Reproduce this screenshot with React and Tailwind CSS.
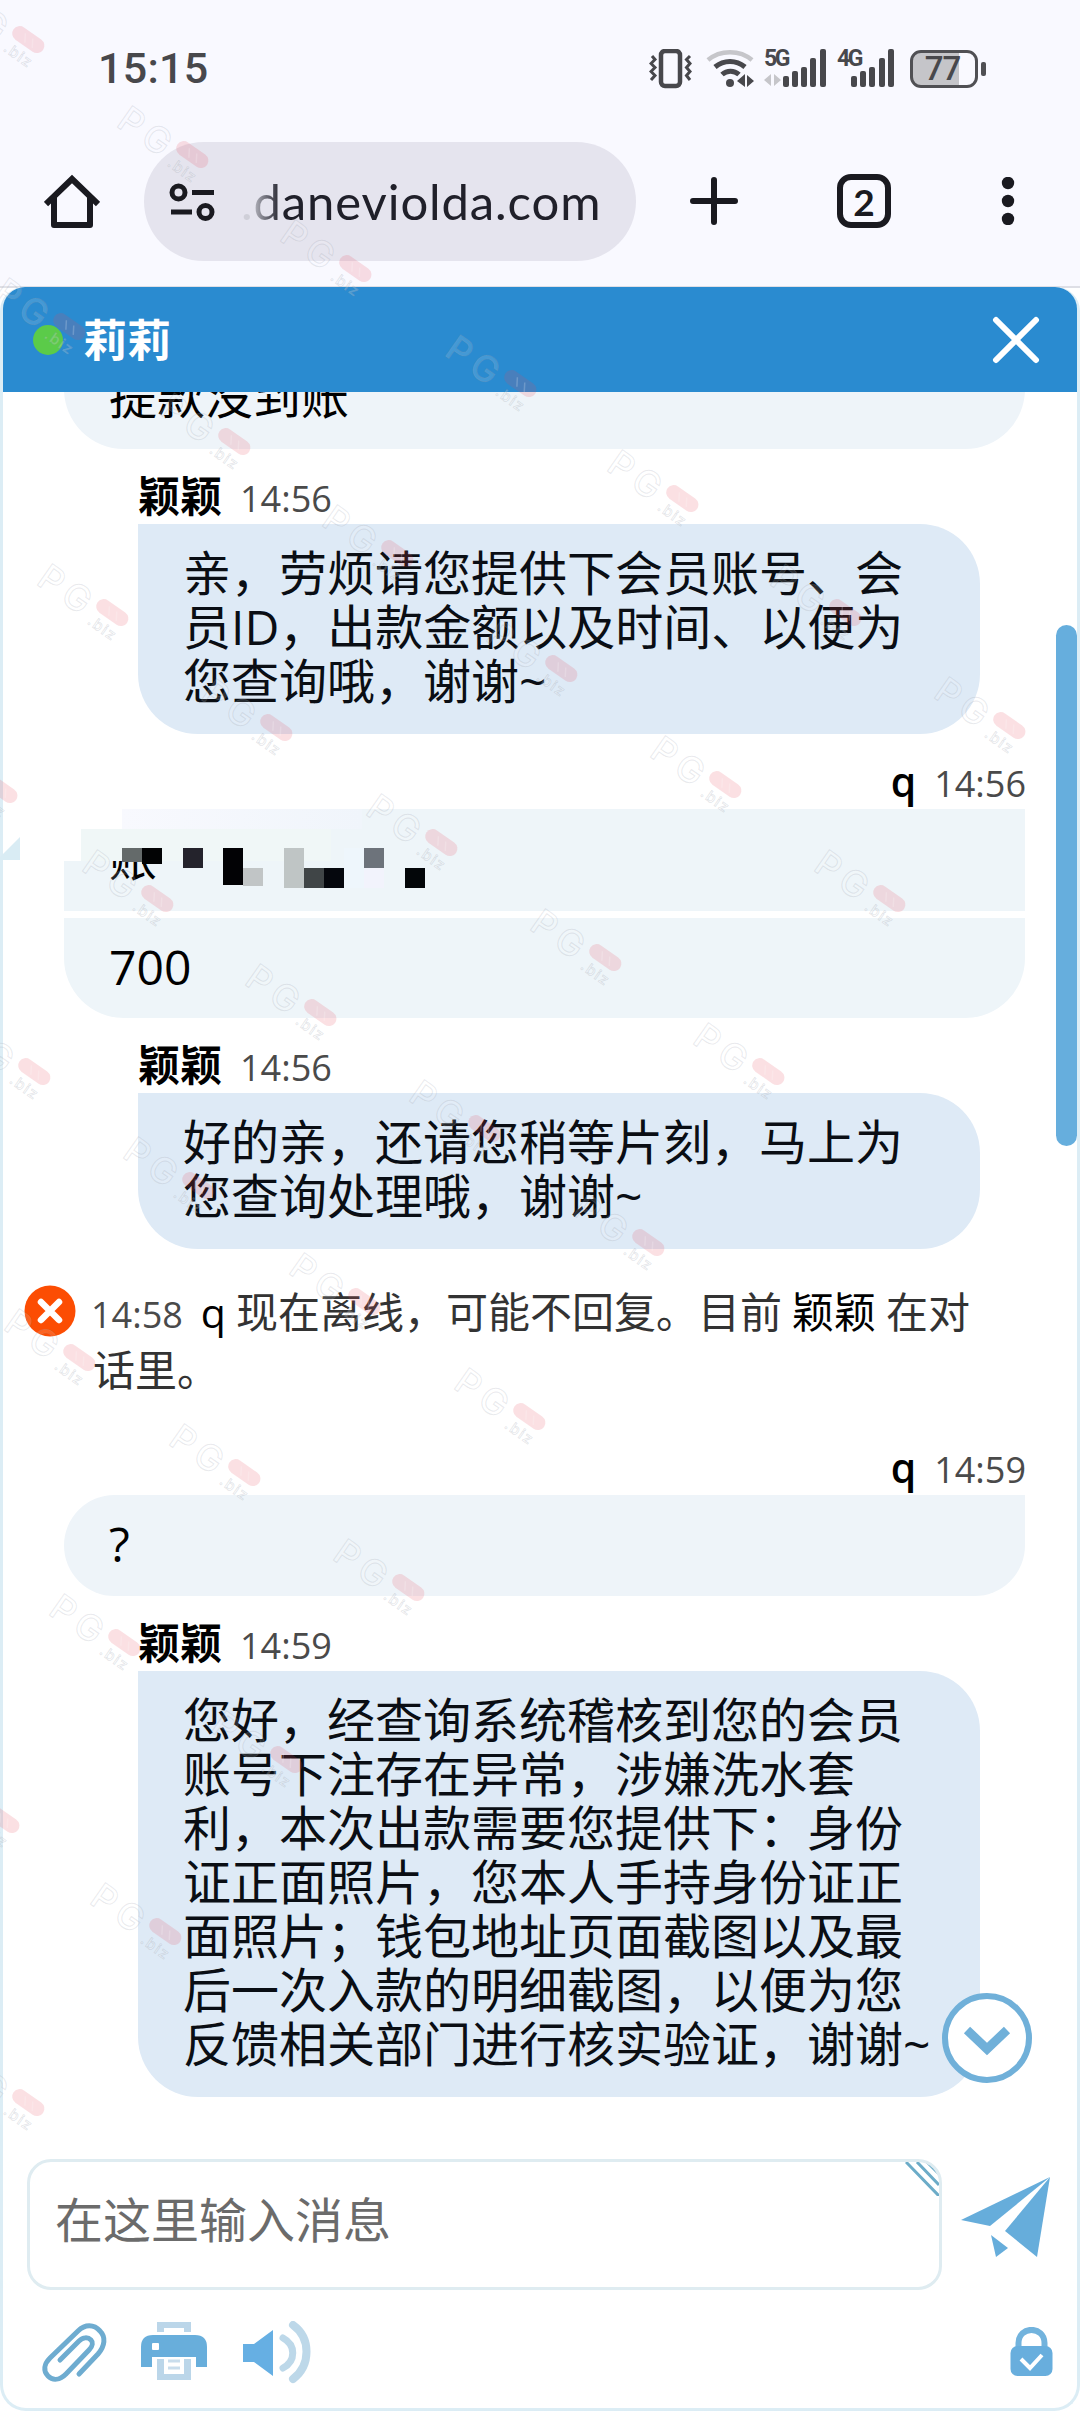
import React from 'react';

const watermarks = [
  [28, 40], [192, 155], [355, 269], [520, 384], [682, 499], [845, 613], [1009, 726],
  [69, 327], [234, 442], [397, 554], [561, 669], [725, 785], [889, 899],
  [-50, 497], [112, 613], [276, 728], [441, 843], [605, 958], [768, 1072],
  [1, 790], [157, 899], [320, 1013], [484, 1129], [648, 1243],
  [34, 1072], [198, 1186], [364, 1302], [529, 1417],
  [79, 1358], [244, 1473], [408, 1588],
  [124, 1643], [286, 1760],
  [3, 1820], [165, 1932], [28, 2103],
];

// x, y, width, height, colour of every mosaic block over the hidden account
const mosaic = [
  [0, 0, 20, 14, '#646a6a'],
  [20, 0, 20, 16, '#020304'],
  [61, 0, 20, 20, '#24232c'],
  [101, 0, 20, 37, '#020205'],
  [121, 20, 20, 18, '#c1c5c6'],
  [162, 0, 20, 40, '#bfc5c5'],
  [182, 20, 20, 20, '#404547'],
  [202, 20, 20, 20, '#05070d'],
  [222, 0, 20, 40, '#eef6fc'],
  [242, 0, 20, 20, '#6d737b'],
  [242, 20, 20, 20, '#f2f3fc'],
  [283, 20, 20, 20, '#030609'],
];

const Watermarks = () => (
  <svg className="absolute inset-0 pointer-events-none" width="1080" height="2412" viewBox="0 0 1080 2412">
    {watermarks.map(([x, y], index) => (
      <g key={index} transform={`translate(${x} ${y}) rotate(35)`}>
        <text
          x="-80"
          y="20"
          fontFamily="Inter, sans-serif"
          fontSize="36"
          fontWeight="500"
          letterSpacing="6"
          fill="#ffffff"
          fillOpacity="0.15"
          stroke="#8c94a0"
          strokeOpacity="0.2"
          strokeWidth="1"
        >
          PG
        </text>
        <rect x="-18" y="-8" width="36" height="15" rx="7.500" fill="#e8465a" fillOpacity="0.17" />
        <path d="M-6 -4L-1 4M3 -4L8 4" stroke="#ffffff" strokeOpacity="0.2" strokeWidth="1.5" />
        <text
          x="-15"
          y="23"
          fontFamily="Inter, sans-serif"
          fontSize="15"
          fontWeight="500"
          letterSpacing="1.5"
          fill="#ffffff"
          fillOpacity="0.2"
          stroke="#8c94a0"
          strokeOpacity="0.24"
          strokeWidth="0.8"
        >
          .biz
        </text>
      </g>
    ))}
  </svg>
);

const StatusBar = () => (
  <div className="h-[120px] pl-[98px] pr-[94px] pt-[17px] flex items-center justify-between text-[#48484c]">
    <span className="font-['Roboto'] font-medium text-[43px] leading-none tracking-[0.3px]">15:15</span>
    <div className="flex items-center">
      <svg width="44" height="40" viewBox="0 0 44 40" fill="none" stroke="#48484c">
        <rect x="12" y="2" width="19" height="35" rx="4" strokeWidth="4.5" />
        <path d="M3 7L6 10.5L2 14.5L6 18.5L2 22.5L6 26.5L2 31" strokeWidth="3" />
        <path d="M41 7L37.500 10.500L41 14.500L37.500 18.500L41 22.500L37.500 26.500L41 31" strokeWidth="3" />
      </svg>
      <svg className="ml-[13px]" width="50" height="40" viewBox="0 0 50 40" fill="none" strokeWidth="4.500">
        <path d="M2 11C14 0.500 34 0.500 46 11" stroke="#c6c6ca" />
        <path d="M9 18C18 10.500 30 10.500 39 18" stroke="#48484c" strokeWidth="5" />
        <path d="M16 25.500C21 21 28 21 33 25.500" stroke="#48484c" strokeWidth="5" />
        <circle cx="24" cy="34" r="4" fill="#48484c" />
        <path d="M31 32L39 25V38ZM41 26L48 32L41 38Z" fill="#48484c" />
      </svg>
      <div className="relative ml-[8px]">
        <svg width="64" height="40" viewBox="0 0 64 40" fill="#48484c">
          <path d="M0 31L7 25V37ZM10 25L17 31L10 37Z" fill="#c6c6ca" />
          <rect x="19" y="27" width="6" height="11" rx="2" />
          <rect x="28" y="22" width="6" height="16" rx="2" />
          <rect x="37" y="18" width="6" height="20" rx="2" />
          <rect x="46" y="9" width="6" height="29" rx="2" />
          <rect x="56" y="0" width="6" height="38" rx="2" />
        </svg>
        <span className="absolute left-0 top-0 font-['Roboto'] font-bold text-[23px] leading-[20px] tracking-[-2.5px]">5G</span>
      </div>
      <div className="relative ml-[9px]">
        <svg width="60" height="40" viewBox="0 0 60 40" fill="#48484c">
          <rect x="14" y="27" width="6" height="11" rx="2" />
          <rect x="23" y="22" width="6" height="16" rx="2" />
          <rect x="32" y="18" width="6" height="20" rx="2" />
          <rect x="42" y="9" width="6" height="29" rx="2" />
          <rect x="51" y="0" width="6" height="38" rx="2" />
        </svg>
        <span className="absolute left-0 top-0 font-['Roboto'] font-bold text-[23px] leading-[20px] tracking-[-2.5px]">4G</span>
      </div>
      <div className="ml-[13px] flex items-center gap-[3px]">
        <div className="flex h-[38px] w-[68px] items-center justify-center rounded-[11px] border-[3px] border-[#505054] bg-linear-to-r from-[#c5c5c9] from-75% to-[#f9f9ff] to-75%">
          <span className="font-['Roboto'] font-medium text-[33px] leading-none -ml-[3px] tracking-[-1px]">77</span>
        </div>
        <div className="h-[14px] w-[5px] rounded-[2px] bg-[#505054]" />
      </div>
    </div>
  </div>
);

const BrowserBar = () => (
  <div className="h-[165px] pt-[22px] flex items-start">
    <svg className="ml-[44px] mt-[32px]" width="56" height="56" viewBox="0 0 56 56" fill="none" stroke="#1a1a20" strokeWidth="6">
      <path d="M2 30L28 5L54 30" />
      <path d="M10 23V51H46V23" strokeLinejoin="round" />
    </svg>
    <div className="ml-[44px] flex h-[119px] w-[492px] items-center rounded-full bg-[#e5e4ee]">
      <svg className="ml-[25px]" width="46" height="40" viewBox="0 0 46 40" fill="none" stroke="#1a1a20" strokeWidth="5">
        <circle cx="9.500" cy="10.500" r="6.500" />
        <path d="M23 10.500H45M2 30H23" />
        <circle cx="36.500" cy="30" r="6.500" />
      </svg>
      <span className="ml-[26px] font-['Lato'] text-[49px] leading-none tracking-[0.9px] text-[#20202a]">
        <span className="bg-linear-to-r from-[#cfcfd8] from-20% to-[#20202a] bg-clip-text text-transparent">.d</span>aneviolda.com
      </span>
    </div>
    <svg className="ml-[54px] mt-[35px]" width="48" height="48" viewBox="0 0 48 48" stroke="#1a1a20" strokeWidth="6" strokeLinecap="round">
      <path d="M24 3V45M3 24H45" />
    </svg>
    <div className="ml-[99px] mt-[32px] flex size-[54px] items-center justify-center rounded-[14px] border-[6px] border-[#1a1a20]">
      <span className="font-['Lato'] font-bold text-[37px] leading-none text-[#1a1a20]">2</span>
    </div>
    <svg className="ml-[110px] mt-[35px]" width="14" height="48" viewBox="0 0 14 48" fill="#1a1a20">
      <circle cx="7" cy="6" r="6.200" />
      <circle cx="7" cy="24" r="6.200" />
      <circle cx="7" cy="42" r="6.200" />
    </svg>
  </div>
);

const ChatHeader = () => (
  <div className="flex h-[105px] shrink-0 items-center rounded-t-[22px] bg-[#2a8bd0] pl-[30px] pr-[35px]">
    <div className="size-[30px] rounded-full bg-[#5bcb49]" />
    <h1 className="ml-[20px] text-[44px] font-bold leading-none text-white">莉莉</h1>
    <svg className="ml-auto" width="52" height="52" viewBox="0 0 52 52" stroke="#ffffff" strokeWidth="6" strokeLinecap="round">
      <path d="M6 6L46 46M46 6L6 46" />
    </svg>
  </div>
);

const Meta = ({ name, time, own }) => (
  <div
    className={
      own
        ? 'flex h-[75px] items-baseline justify-end gap-[18px] pr-[51px] pt-[19px] leading-[56px]'
        : 'flex h-[75px] items-baseline gap-[18px] pl-[135px] pt-[19px] leading-[56px]'
    }
  >
    <span className={own ? 'text-[41px] font-semibold text-black' : 'text-[42px] font-bold text-black'}>{name}</span>
    <span className="text-[36px] text-[#4a4a4a]">{time}</span>
  </div>
);

const AgentBubble = ({ lines }) => (
  <div className="ml-[135px] w-[842px] rounded-b-[60px] rounded-tr-[60px] bg-[#deeaf6] pb-[26px] pl-[45px] pt-[22px] text-[48px] leading-[54px] text-[#0a0e14]">
    {lines.map((line, index) => (
      <p key={index} className="whitespace-nowrap">{line}</p>
    ))}
  </div>
);

const RedactedBubble = () => (
  <div className="relative ml-[61px] h-[102px] w-[961px] bg-[#eef5f9] pl-[45px] pt-[22px] text-[48px] leading-[54px] text-black">
    <span>账</span>
    <div className="absolute left-0 top-0 h-[52px] w-[17px] bg-white" />
    <div className="absolute left-0 top-0 h-[20px] w-[58px] bg-white" />
    <div className="absolute left-[17px] top-[20px] h-[32px] w-[250px] bg-[#f0f7f7]" />
    <div className="absolute left-[58px] top-0 h-[20px] w-[240px] bg-linear-to-r from-[#f8f9fe] to-[#f0f5fb]" />
    <svg className="absolute left-[58px] top-[39px]" width="303" height="40" viewBox="0 0 303 40">
      {mosaic.map(([x, y, width, height, fill], index) => (
        <rect key={index} x={x} y={y} width={width} height={height} fill={fill} />
      ))}
    </svg>
  </div>
);

const OfflineNotice = () => (
  <div className="flex h-[171px] items-start pl-[21px] pt-[35px]">
    <svg className="mt-px shrink-0" width="52" height="52" viewBox="0 0 52 52">
      <circle cx="26" cy="26" r="25.500" fill="#fc4d03" />
      <path d="M17 17L35 35M35 17L17 35" stroke="#ffffff" strokeWidth="6.500" strokeLinecap="round" />
    </svg>
    <p className="ml-[15px] text-[42px] leading-[55px] text-[#333333] whitespace-nowrap">
      <span className="text-[36px] text-[#4a4a4a]">14:58</span>
      <span className="ml-[18px] mr-[10px] text-[41px] text-black">q</span>
      现在离线，可能不回复。目前
      <span className="mx-[10px] text-black">颖颖</span>
      在对
      <br />
      <span className="ml-[2px]">话里。</span>
    </p>
  </div>
);

const Composer = () => (
  <div className="flex h-[134px] items-start pl-[24px]">
    <div className="relative h-[131px] w-[915px] overflow-hidden rounded-[24px] border-[3px] border-[#dfecf1] pl-[25px] pt-[28px] text-[48px] leading-[60px] text-[#6b6b6b]">
      在这里输入消息
      <svg className="absolute right-0 top-0" width="34" height="34" viewBox="0 0 34 34" stroke="#6cacc8" strokeWidth="3">
        <path d="M1 0L34 34M12 0L34 23M22 0L34 12" />
      </svg>
    </div>
    <svg className="ml-[19px] mt-[18px]" width="90" height="82" viewBox="0 0 90 82" fill="#66addb">
      <path d="M0 43L89 0L29 49Z" />
      <path d="M89 0L76 80L44 54Z" />
      <path d="M30 58L47 71L35 80Z" />
    </svg>
  </div>
);

const Toolbar = () => (
  <div className="flex items-start pl-[37px] pt-[26px]">
    <svg width="68" height="64" viewBox="0 0 68 64" fill="none" stroke="#6eacd0" strokeWidth="5" strokeLinecap="round" strokeLinejoin="round">
      <path d="M39 55L58 35C65 27 66 18 60 12C54 5 45 5 38 12L10 39C4 45 3 52 8 57C13 62 20 61 26 55L49 31C53 27 53 23 51 21C48 18 43 18 39 22L20 41" />
    </svg>
    <svg className="ml-[32px] mt-[2px]" width="68" height="60" viewBox="0 0 68 60">
      <path d="M17 1H51V11H44V7H24V11H17Z" fill="#bbd6e9" />
      <path d="M1 26Q1 14 13 14H55Q67 14 67 26V46H56V36H12V46H1Z" fill="#68aedb" />
      <rect x="12" y="22" width="7" height="7" rx="1" fill="#ffffff" />
      <path d="M17 38H24V53H44V38H51V59H17Z" fill="#bbd6e9" />
      <path d="M28 40H40M28 47H40" stroke="#c9ddec" strokeWidth="3" />
    </svg>
    <svg className="ml-[34px] mt-[2px]" width="70" height="64" viewBox="0 0 70 64" fill="none">
      <path d="M1 23H12L31 9V55L12 41H1Z" fill="#66afe3" />
      <path d="M41 17C54 24 54 40 41 47" stroke="#bdd8e9" strokeWidth="7" strokeLinecap="round" />
      <path d="M51 4C69 17 69 44 51 58" stroke="#bdd8e9" strokeWidth="8" strokeLinecap="round" />
    </svg>
    <svg className="ml-auto mr-[24px] mt-[8px]" width="43" height="50" viewBox="0 0 43 50" fill="none">
      <path d="M8.500 22V16C8.500 -1.500 34.500 -1.500 34.500 16V22" stroke="#72b3dd" strokeWidth="6" />
      <rect x="0.500" y="19" width="42" height="30" rx="7" fill="#68aedd" />
      <path d="M11 32L20 41L32 28" stroke="#ffffff" strokeWidth="4" />
    </svg>
  </div>
);

const App = () => {
  return (
    <div className="relative h-[2412px] w-[1080px] overflow-hidden bg-white font-['Open_Sans','Noto_Sans_CJK_SC',sans-serif]">
      <div className="h-[288px] border-b-2 border-[#dedfe6] bg-[#f9f9ff]">
        <StatusBar />
        <BrowserBar />
      </div>

      <div className="relative -mt-px flex h-[2124px] flex-col rounded-b-[26px] rounded-t-[24px] border-x-[3px] border-b-[3px] border-[#dcedf5] bg-white">
        <ChatHeader />

        <div className="relative h-[1767px] shrink-0 overflow-hidden">
          <div className="-mt-[45px] ml-[61px] h-[102px] w-[961px] rounded-b-[60px] bg-[#eef4f9] pl-[45px] pt-[22px] text-[48px] leading-[54px] text-black">
            提款没到账
          </div>

          <Meta name="颖颖" time="14:56" />
          <AgentBubble
            lines={['亲，劳烦请您提供下会员账号、会', '员ID，出款金额以及时间、以便为', '您查询哦，谢谢~']}
          />

          <Meta name="q" time="14:56" own />
          <RedactedBubble />
          <div className="ml-[61px] mt-[7px] h-[100px] w-[961px] rounded-b-[60px] bg-[#eef5f9] pl-[45px] pt-[22px] text-[48px] leading-[54px] text-black">
            700
          </div>

          <Meta name="颖颖" time="14:56" />
          <AgentBubble lines={['好的亲，还请您稍等片刻，马上为', '您查询处理哦，谢谢~']} />

          <OfflineNotice />

          <Meta name="q" time="14:59" own />
          <div className="ml-[61px] h-[101px] w-[961px] rounded-b-[60px] rounded-tl-[60px] bg-[#eef4f9] pl-[45px] pt-[22px] text-[48px] leading-[54px] text-black">
            ?
          </div>

          <Meta name="颖颖" time="14:59" />
          <AgentBubble
            lines={[
              '您好，经查询系统稽核到您的会员',
              '账号下注存在异常，涉嫌洗水套',
              '利，本次出款需要您提供下：身份',
              '证正面照片，您本人手持身份证正',
              '面照片；钱包地址页面截图以及最',
              '后一次入款的明细截图，以便为您',
              '反馈相关部门进行核实验证，谢谢~',
            ]}
          />

          <div className="absolute right-0 top-[233px] h-[521px] w-[21px] rounded-full bg-[#66aedd]" />
          <svg className="absolute left-[939px] top-[1601px]" width="90" height="90" viewBox="0 0 90 90">
            <circle cx="45" cy="45" r="42" fill="#ffffff" stroke="#70b0d9" strokeWidth="6" />
            <path d="M25 37L45 56L65 37" fill="none" stroke="#70b0d9" strokeWidth="9" />
          </svg>
        </div>

        <Composer />
        <Toolbar />
      </div>

      <svg className="absolute left-0 top-[837px]" width="20" height="23" viewBox="0 0 20 23">
        <path d="M0 20L20 0V23H0Z" fill="#d9ecf4" />
      </svg>
      <Watermarks />
    </div>
  );
};

export default App;
